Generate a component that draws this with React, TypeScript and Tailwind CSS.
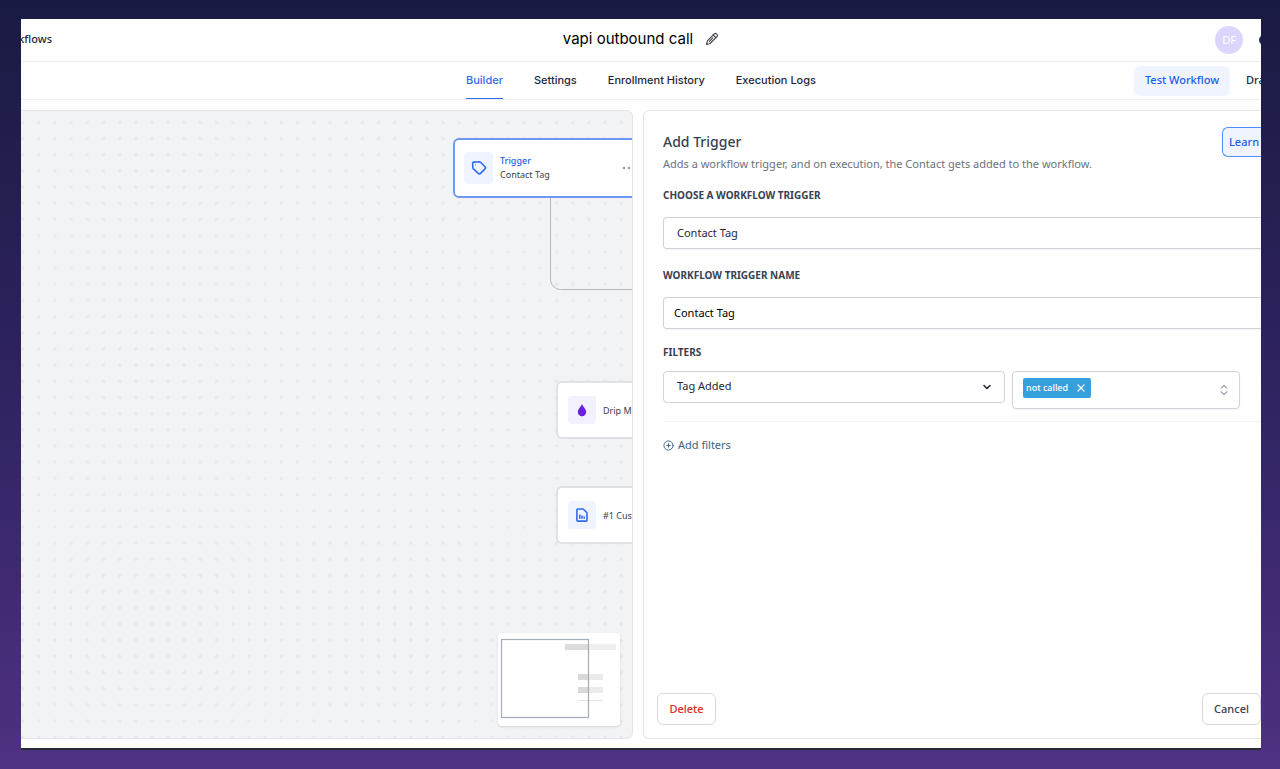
import type { ReactNode } from 'react';
import { ChevronDown, ChevronsUpDown, CirclePlus, X } from 'lucide-react';

const tabs = ['Builder', 'Settings', 'Enrollment History', 'Execution Logs'];

const minimapBlocks = [
  { x: 67, y: 11, w: 51, h: 6, shade: '#efefef' },
  { x: 67, y: 11, w: 23, h: 6, shade: '#dcdcdc' },
  { x: 80, y: 41, w: 25, h: 6, shade: '#ebebeb' },
  { x: 80, y: 41, w: 10, h: 6, shade: '#d9d9d9' },
  { x: 80, y: 54, w: 25, h: 6, shade: '#ebebeb' },
  { x: 80, y: 54, w: 10, h: 6, shade: '#d9d9d9' },
  { x: 80, y: 67, w: 25, h: 1, shade: '#e2e2e2' },
];

const fieldLabel = 'text-[10px] font-bold leading-4 text-[#374151]';

function PencilIcon() {
  return (
    <svg viewBox="0 0 14 14" className="size-3.5" fill="none" stroke="#3a3f48" strokeWidth="1.100" strokeLinejoin="round" strokeLinecap="round">
      <path d="M1.500 12.500l.9-3.700L9.300 1.900a1.500 1.500 0 0 1 2.100 0l.6.600a1.500 1.500 0 0 1 0 2.100L5 11.500z" />
      <path d="M8.200 3l2.700 2.700M4.500 9.300l3.300-3.400" />
    </svg>
  );
}

function TagIcon() {
  return (
    <svg viewBox="0 0 16 16" className="size-4" fill="none" stroke="#2f6bf2" strokeWidth="1.600" strokeLinejoin="round" strokeLinecap="round">
      <path d="M1.700 3.200a1.200 1.200 0 0 1 1.100-1.100L8.400 1.800a1.600 1.600 0 0 1 1.200.5l4.400 4.500a1.500 1.500 0 0 1 0 2.100l-4.500 4.500a1.500 1.500 0 0 1-2.200 0L2.200 8.600a1.600 1.600 0 0 1-.4-1.100z" />
      <path d="M4.600 4.800h.01" strokeWidth="1" />
    </svg>
  );
}

function DropIcon() {
  return (
    <svg viewBox="0 0 10 14" className="h-3.5 w-2.5" fill="#6d22d9">
      <path d="M5 1C6 4 9.200 6 9.200 9A4.200 4.200 0 0 1 .8 9C.8 6 4 4 5 1z" />
    </svg>
  );
}

function FileIcon() {
  return (
    <svg viewBox="0 0 14 16" className="h-4 w-3.5" fill="none" stroke="#2f6bf2" strokeWidth="1.600" strokeLinejoin="round">
      <path d="M2.800 2h5.400L12 5.800v7.400a.9.9 0 0 1-.9.9H2.800a.9.9 0 0 1-.9-.9V2.900a.9.9 0 0 1 .9-.9z" />
      <path d="M4.800 7.500v4.300M7 8.500v3.300M9.200 9.500v2.300" strokeWidth="1.500" />
    </svg>
  );
}

function StepNode({ className, icon, tint, label }: { className: string; icon: ReactNode; tint: string; label: string }) {
  return (
    <div className={`absolute flex h-[58px] w-52 items-center gap-[7px] rounded-md border-2 border-[#dfe1e5] bg-white pl-2.5 ${className}`}>
      <span className={`flex size-7 items-center justify-center rounded ${tint}`}>{icon}</span>
      <span className="whitespace-nowrap pt-0.5 text-[9px] text-[#374151]">{label}</span>
    </div>
  );
}

function Canvas() {
  return (
    <section className="relative overflow-hidden rounded-r-md border-y border-r border-[#e4e5e8] bg-[#f2f3f5]">
      <svg className="absolute inset-0 size-full">
        <defs>
          <pattern id="dots" x="9.600" y="3.300" width="16.180" height="16.180" patternUnits="userSpaceOnUse">
            <circle cx="8.100" cy="8.100" r="1.900" fill="#e8e9eb" />
          </pattern>
        </defs>
        <rect width="100%" height="100%" fill="url(#dots)" />
        <path d="M529.500 80V168a10 10 0 0 0 10 10.500H760" fill="none" stroke="#b4b7bd" />
      </svg>

      <div className="absolute left-[432px] top-[27px] flex h-[60px] w-[250px] items-center gap-[7px] rounded-md border-2 border-[#6f98f5] bg-white pl-[9px]">
        <span className="flex h-8 w-[29px] items-center justify-center rounded bg-[#eff4ff]">
          <TagIcon />
        </span>
        <div className="w-[114px] text-[9px] leading-3.5">
          <p className="font-medium text-[#155eef]">Trigger</p>
          <p className="text-[#374151]">Contact Tag</p>
        </div>
        <svg viewBox="0 0 16 4" className="h-1 w-4" fill="#9a9da3">
          <circle cx="3" cy="2" r="1.300" />
          <circle cx="8" cy="2" r="1.300" />
          <circle cx="13" cy="2" r="1.300" />
        </svg>
      </div>
      <StepNode className="left-[535px] top-[270px]" icon={<DropIcon />} tint="bg-[#f4f1ff]" label="Drip Mode" />
      <StepNode className="left-[535px] top-[375px]" icon={<FileIcon />} tint="bg-[#eff4ff]" label="#1 Custom" />

      <div className="absolute bottom-3 right-3 rounded bg-white shadow">
        <svg width="122" height="93" viewBox="0 0 122 93">
          {minimapBlocks.map((b, i) => (
            <rect key={i} x={b.x} y={b.y} width={b.w} height={b.h} fill={b.shade} />
          ))}
          <rect x="3.500" y="6.500" width="87" height="78" fill="none" stroke="#a5acb9" strokeWidth="1.200" />
        </svg>
      </div>
    </section>
  );
}

function TriggerPanel() {
  return (
    <section className="flex flex-col overflow-hidden rounded-l-md border-y border-l border-[#e4e5e8] bg-white">
      <div className="flex items-start justify-between pl-[19px] pt-4">
        <div className="pt-[5px]">
          <h2 className="text-sm font-medium leading-5 text-[#374151]">Add Trigger</h2>
          <p className="mt-0.5 text-[11px] leading-5 text-[#6b7280]">Adds a workflow trigger, and on execution, the Contact gets added to the workflow.</p>
        </div>
        <button type="button" className="h-[30px] w-[39px] rounded-l-md border-y border-l border-[#528bff] bg-[#eff4ff] pl-1.5 text-left text-[11px] font-medium text-[#155eef]">
          Learn
        </button>
      </div>

      <form className="flex flex-1 flex-col pl-[19px]">
        <label htmlFor="trigger-type" className={`mt-[13px] ${fieldLabel}`}>CHOOSE A WORKFLOW TRIGGER</label>
        <input id="trigger-type" defaultValue="Contact Tag" className="mt-3.5 h-8 rounded-l border-y border-l border-[#d0d3d8] pb-0.5 pl-[13px] text-[11px] text-[#1f2937] shadow-xs" />
        <label htmlFor="trigger-name" className={`mt-[18px] ${fieldLabel}`}>WORKFLOW TRIGGER NAME</label>
        <input id="trigger-name" defaultValue="Contact Tag" className="mt-3.5 h-8 rounded-l border-y border-l border-[#d0d3d8] pb-0.5 pl-2.5 text-[11px] text-black shadow-xs" />
        <label htmlFor="filter" className={`mt-[15px] ${fieldLabel}`}>FILTERS</label>

        <div className="mr-[21px] mt-[11px] grid grid-cols-[3fr_2fr] items-start gap-[7px]">
          <div className="relative">
            <select id="filter" className="h-8 w-full appearance-none rounded border border-[#d0d3d8] bg-white pb-0.5 pl-[13px] text-[11px] text-[#1f2937]">
              <option>Tag Added</option>
            </select>
            <ChevronDown className="pointer-events-none absolute right-3 top-2.5 size-3 text-[#1f2937]" strokeWidth={3} />
          </div>
          <div className="flex h-[38px] items-center justify-between rounded border border-[#d0d3d8] px-2.5 shadow-xs">
            <span className="mb-1 flex h-5 items-center gap-[7px] rounded-xs bg-[#37a0dc] pl-[3px] pr-1 text-[9px] font-medium text-white">
              not called
              <button type="button" aria-label="Remove not called">
                <X className="size-3" strokeWidth={2.5} />
              </button>
            </span>
            <ChevronsUpDown className="-mr-0.5 h-4 w-3.5 text-[#9ca3af]" />
          </div>
        </div>

        <hr className="mt-3 border-[#f3f4f6]" />
        <button type="button" className="mt-[13px] flex items-center gap-1 self-start text-[11px] leading-5 text-[#3b6382]">
          <CirclePlus className="size-[11px]" />
          Add filters
        </button>
      </form>

      <div className="flex justify-between pb-[13px] pl-[13px]">
        <button type="button" className="h-8 w-[59px] rounded-md border border-[#d5d8de] text-[11px] font-medium text-[#d92d20]">Delete</button>
        <button type="button" className="h-8 w-[59px] rounded-md border border-[#d5d8de] text-[11px] font-medium text-[#374151]">Cancel</button>
      </div>
    </section>
  );
}

export default function App() {
  return (
    <div className="flex min-h-screen flex-col bg-linear-to-b from-[#191a42] via-[#2f2360] to-[#4f3183] pb-[19px] pl-[21px] pr-[19px] pt-[19px] font-['Noto_Sans',sans-serif]">
      <div className="flex flex-1 flex-col overflow-hidden border-b-2 border-[#2b2b33] bg-white">
        <header className="grid h-[43px] grid-cols-[1fr_auto_1fr] items-center border-b border-[#eeeff1]">
          <a href="#workflows" className="flex w-[31px] justify-end overflow-hidden pb-0.5 text-[11px] font-medium text-[#1f2937]">kflows</a>
          <div className="flex items-center gap-3 pb-0.5">
            <h1 className="font-['Inter',sans-serif] text-[15px] text-black">vapi outbound call</h1>
            <button type="button" aria-label="Rename workflow">
              <PencilIcon />
            </button>
          </div>
          <div className="flex items-center justify-end gap-4 overflow-hidden">
            <span className="flex size-7 items-center justify-center rounded-full bg-[#dcd5fd] text-[11px] text-white">DF</span>
            <span className="-mr-2 size-2.5 rounded-full bg-[#1f2937]" />
          </div>
        </header>

        <div className="grid h-[38px] grid-cols-[1fr_auto_1fr] items-center border-b border-[#eeeff1]">
          <span />
          <nav className="flex h-[37px] gap-[31px] font-['Inter',sans-serif] text-[11px] font-medium">
            {tabs.map((tab, i) => (
              <a
                key={tab}
                href="#tab"
                className={`flex items-center border-b ${i === 0 ? 'border-[#2f6bf2] text-[#2f6bf2]' : 'border-transparent text-[#1f2937]'}`}
              >
                {tab}
              </a>
            ))}
          </nav>
          <div className="flex items-center justify-end gap-4">
            <button type="button" className="h-[30px] w-24 rounded-md bg-[#eff4ff] text-[11px] font-medium text-[#155eef]">Test Workflow</button>
            <span className="w-[15px] overflow-hidden text-[11px] font-medium text-[#1f2937]">Dra</span>
          </div>
        </div>

        <main className="grid flex-1 grid-cols-[612fr_618fr] gap-2.5 pb-[9px] pt-2.5">
          <Canvas />
          <TriggerPanel />
        </main>
      </div>
    </div>
  );
}
